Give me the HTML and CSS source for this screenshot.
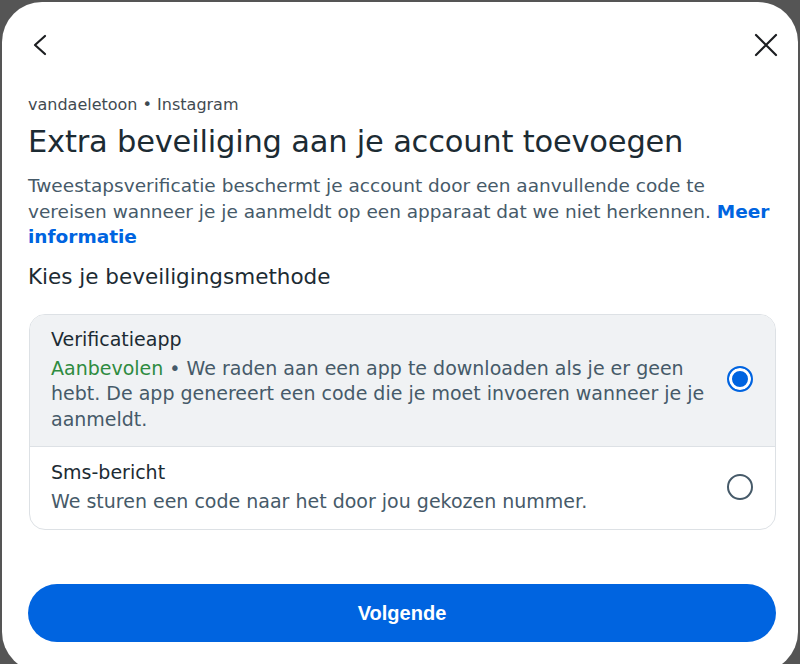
FILE: index.html
```html
<!DOCTYPE html>
<html lang="nl">
<head>
    <meta charset="UTF-8">
    <meta name="viewport" content="width=device-width, initial-scale=1.0">
    <title>Extra beveiliging</title>
    <link rel="stylesheet" href="styles.css">
</head>
<body>

<!-- Dialog -->
<div class="dialog">

    <div class="topbar">
        <button class="icon-btn" aria-label="Terug">
            <svg width="16" height="22" viewBox="0 0 16 22"><path d="M13 2 L3 11 L13 20" fill="none" stroke="#1c1e21" stroke-width="2.2" stroke-linecap="round" stroke-linejoin="round"/></svg>
        </button>
        <button class="icon-btn" aria-label="Sluiten">
            <svg width="24" height="24" viewBox="0 0 24 24"><path d="M2 2 L22 22 M22 2 L2 22" fill="none" stroke="#1c1e21" stroke-width="2.2" stroke-linecap="round"/></svg>
        </button>
    </div>

    <div class="content">
        <p class="account">vandaeletoon • Instagram</p>
        <h1>Extra beveiliging aan je account toevoegen</h1>
        <p class="intro">Tweestapsverificatie beschermt je account door een aanvullende code te<br>vereisen wanneer je je aanmeldt op een apparaat dat we niet herkennen. <a href="#">Meer informatie</a></p>

        <h2>Kies je beveiligingsmethode</h2>

        <div class="options">
            <label class="option selected">
                <div class="option-text">
                    <div class="option-title">Verificatieapp</div>
                    <div class="option-desc"><span class="green">Aanbevolen</span> • We raden aan een app te downloaden als je er geen<br>hebt. De app genereert een code die je moet invoeren wanneer je je aanmeldt.</div>
                </div>
                <span class="radio checked"></span>
            </label>
            <label class="option">
                <div class="option-text">
                    <div class="option-title">Sms-bericht</div>
                    <div class="option-desc">We sturen een code naar het door jou gekozen nummer.</div>
                </div>
                <span class="radio"></span>
            </label>
        </div>
    </div>

    <button class="primary">Volgende</button>
</div>

</body>
</html>
```

FILE: styles.css
```css
html, body {
    margin: 0;
    height: 100%;
}

body {
    background-color: #555555;
    font-family: "DejaVu Sans", "Noto Sans", sans-serif;
    color: #1c2b33;
    overflow: hidden;
}

/* Dialog box */
.dialog {
    box-sizing: border-box;
    margin: 2px 2px 0 2px;
    height: 670px;
    background-color: #ffffff;
    border-radius: 40px;
    padding: 0 20px 0 26px;
    display: flex;
    flex-direction: column;
}

.topbar {
    display: flex;
    justify-content: space-between;
    align-items: center;
    height: 86px;
}

.icon-btn {
    background: none;
    border: none;
    padding: 0;
    cursor: pointer;
    display: flex;
    align-items: center;
}

.icon-btn:first-child {
    margin-left: 4px;
}

/* Text */
.account {
    margin: 7px 0 0 0;
    font-size: 16px;
    line-height: 20px;
    color: #1c2b33;
    opacity: 0.85;
}

h1 {
    margin: 7px 0 0 0;
    font-size: 30.5px;
    font-weight: 400;
    line-height: 40px;
    letter-spacing: -0.2px;
}

.intro {
    margin: 11px 0 0 0;
    font-size: 18.5px;
    line-height: 25.5px;
    color: #465a69;
}

.intro a {
    color: #0064e0;
    font-weight: 700;
    text-decoration: none;
}

h2 {
    margin: 13px 0 0 0;
    font-size: 21.5px;
    font-weight: 400;
    line-height: 28px;
}

/* Options list */
.options {
    margin: 23px 2px 0 1px;
    border: 1px solid #dde1e5;
    border-radius: 16px;
    overflow: hidden;
}

.option {
    display: flex;
    align-items: center;
    gap: 8px;
    padding: 11px 22px 14px 21px;
    cursor: pointer;
}

.option + .option {
    border-top: 1px solid #dde1e5;
    padding-top: 12px;
    padding-bottom: 14px;
}

.option.selected {
    background-color: #f0f2f4;
}

.option-text {
    flex: 1;
}

.option-title {
    font-size: 19px;
    line-height: 26px;
}

.option-desc {
    margin-top: 4px;
    font-size: 19px;
    line-height: 25.5px;
    color: #465a69;
}

.green {
    color: #2e8b3f;
}

.radio {
    box-sizing: border-box;
    width: 26px;
    height: 26px;
    border-radius: 50%;
    border: 2px solid #465a69;
    flex-shrink: 0;
}

.radio.checked {
    border-color: #0064e0;
    background-color: #0064e0;
    box-shadow: inset 0 0 0 3px #ffffff;
}

/* Button */
.primary {
    margin: auto 2px 30px 0;
    height: 58px;
    border: none;
    border-radius: 29px;
    background-color: #0064e0;
    color: #ffffff;
    font-family: "Liberation Sans", Arial, sans-serif;
    font-size: 20px;
    font-weight: 700;
    cursor: pointer;
}
```
